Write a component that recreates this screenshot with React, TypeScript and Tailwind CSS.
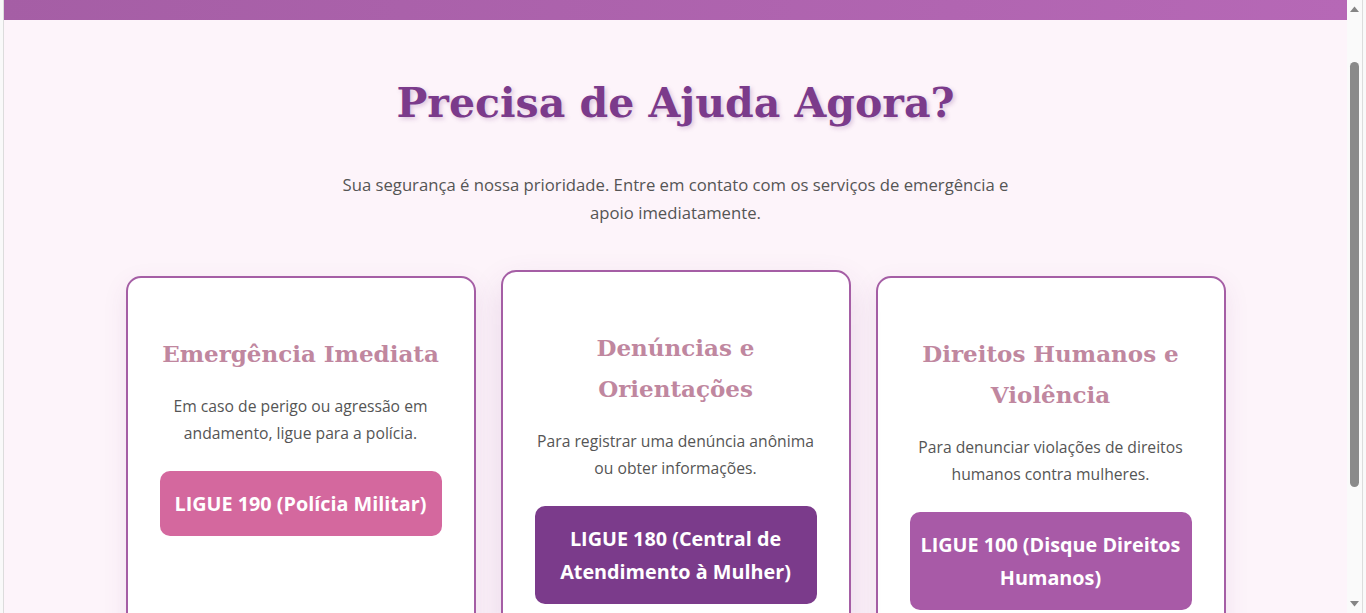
import { useEffect, useRef } from "react"

const cards = [
  {
    title: "Emergência Imediata",
    text: "Em caso de perigo ou agressão em andamento, ligue para a polícia.",
    cta: "LIGUE 190 (Polícia Militar)",
    btn: "bg-[#d4689e]",
    raised: false,
  },
  {
    title: "Denúncias e Orientações",
    text: "Para registrar uma denúncia anônima ou obter informações.",
    cta: "LIGUE 180 (Central de Atendimento à Mulher)",
    btn: "bg-[#7b3b8b]",
    raised: true,
  },
  {
    title: "Direitos Humanos e Violência",
    text: "Para denunciar violações de direitos humanos contra mulheres.",
    cta: "LIGUE 100 (Disque Direitos Humanos)",
    btn: "bg-[#a85aa7]",
    raised: false,
  },
]

// the window's classic scrollbar, drawn since the headless browser hides the real one
function Scrollbar() {
  return (
    <div className="flex w-[15px] shrink-0 flex-col items-center bg-[#fafafa]">
      <svg className="shrink-0" width="15" height="17" viewBox="0 0 15 17">
        <polygon points="3,12 7.5,6.5 12,12" fill="#858585" />
      </svg>
      <div className="flex w-full flex-1 flex-col items-center pt-[45px]">
        <div className="h-[425px] w-[9px] rounded-full bg-[#8a8a8a]" />
      </div>
      <svg className="shrink-0" width="15" height="17" viewBox="0 0 15 17">
        <polygon points="3,5 7.5,10.5 12,5" fill="#858585" />
      </svg>
    </div>
  )
}

export default function App() {
  const scroller = useRef<HTMLDivElement>(null)

  useEffect(() => {
    if (scroller.current) scroller.current.scrollTop = 65
  }, [])

  return (
    <div className="flex h-screen bg-[#f9f9f9] px-[3px]">
      <div className="flex flex-1 overflow-hidden border-x border-[#dcdcdc]">
        <div
          ref={scroller}
          className="flex-1 overflow-hidden bg-[#fdf4fa] font-['Open_Sans',sans-serif]"
        >
          <header className="h-[85px] bg-gradient-to-r from-[#a55ea5] to-[#b668b6]" />

          <section className="px-6 pt-[55px] pb-[127px] text-center">
            <h1 className="font-['DejaVu_Serif',serif] text-[41px] font-bold leading-[56px] text-[#7b3b8b] [text-shadow:2px_2px_4px_rgba(123,59,139,0.25)]">
              Precisa de Ajuda Agora?
            </h1>
            <p className="mx-auto mt-[40px] max-w-[700px] text-[16.7px] leading-[28px] text-[#555]">
              Sua segurança é nossa prioridade. Entre em contato com os serviços de emergência e
              apoio imediatamente.
            </p>

            <div className="mx-auto mt-[49px] grid max-w-[1100px] grid-cols-3 gap-[25px]">
              {cards.map((c) => (
                <div
                  key={c.title}
                  className={`rounded-[15px] border-2 border-[#a55ea5] bg-white px-8 pt-[55px] pb-8 ${
                    c.raised
                      ? "-translate-y-[6px] shadow-[0_14px_32px_rgba(123,59,139,0.16)]"
                      : "shadow-[0_8px_24px_rgba(123,59,139,0.1)]"
                  }`}
                >
                  <h3 className="-mx-2 font-['DejaVu_Serif',serif] text-[23px] font-bold leading-[41px] text-[#c0879f]">
                    {c.title}
                  </h3>
                  <p className="-mx-1 mt-[19px] text-[15.7px] leading-[27px] text-[#555]">{c.text}</p>
                  <button
                    className={`mt-6 w-full rounded-[10px] px-2 py-4 text-[19.8px] font-bold leading-[33px] text-white ${c.btn}`}
                  >
                    {c.cta}
                  </button>
                </div>
              ))}
            </div>
          </section>
        </div>
        <Scrollbar />
      </div>
    </div>
  )
}
